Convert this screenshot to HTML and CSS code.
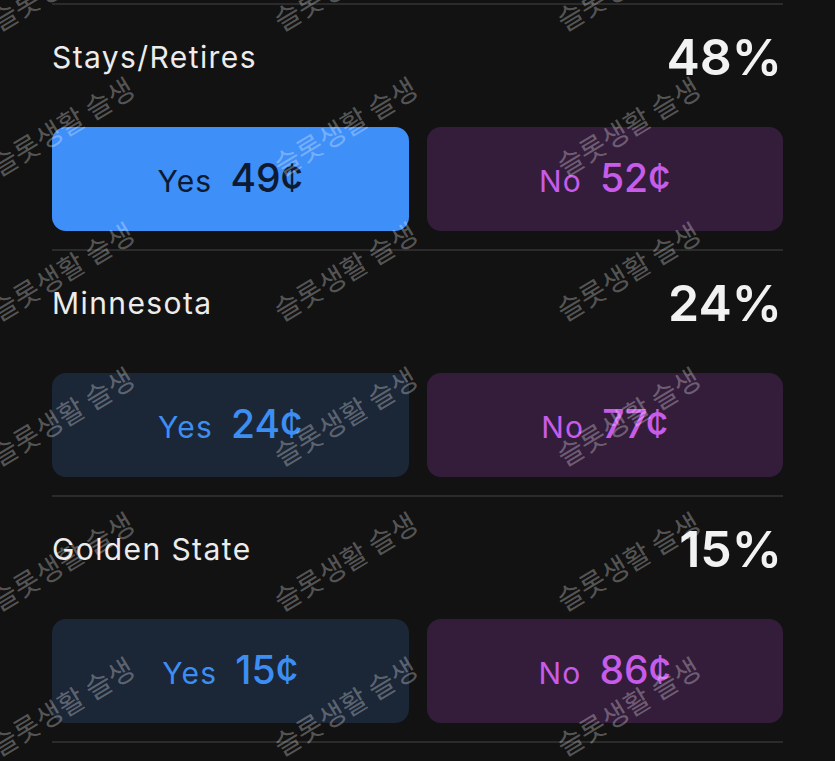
FILE: index.html
```html
<!DOCTYPE html>
<html lang="en">
<head>
<meta charset="utf-8">
<title>Markets</title>
<link rel="stylesheet" href="styles.css">
</head>
<body>
<div class="page">
  <ul class="markets">
    <li class="market">
      <div class="head"><span class="name">Stays/Retires</span><span class="pct">48%</span></div>
      <div class="actions">
        <button class="btn yes active"><span class="lbl">Yes</span><span class="price">49¢</span></button>
        <button class="btn no"><span class="lbl">No</span><span class="price">52¢</span></button>
      </div>
    </li>
    <li class="market">
      <div class="head"><span class="name">Minnesota</span><span class="pct">24%</span></div>
      <div class="actions">
        <button class="btn yes"><span class="lbl">Yes</span><span class="price">24¢</span></button>
        <button class="btn no"><span class="lbl">No</span><span class="price">77¢</span></button>
      </div>
    </li>
    <li class="market">
      <div class="head"><span class="name">Golden State</span><span class="pct">15%</span></div>
      <div class="actions">
        <button class="btn yes"><span class="lbl">Yes</span><span class="price">15¢</span></button>
        <button class="btn no"><span class="lbl">No</span><span class="price">86¢</span></button>
      </div>
    </li>
  </ul>
  <div class="watermark" aria-hidden="true">
    <span>슬롯생활 슬생</span><span>슬롯생활 슬생</span><span>슬롯생활 슬생</span>
    <span>슬롯생활 슬생</span><span>슬롯생활 슬생</span><span>슬롯생활 슬생</span>
    <span>슬롯생활 슬생</span><span>슬롯생활 슬생</span><span>슬롯생활 슬생</span>
    <span>슬롯생활 슬생</span><span>슬롯생활 슬생</span><span>슬롯생활 슬생</span>
    <span>슬롯생활 슬생</span><span>슬롯생활 슬생</span><span>슬롯생활 슬생</span>
    <span>슬롯생활 슬생</span><span>슬롯생활 슬생</span><span>슬롯생활 슬생</span>
  </div>
</div>
</body>
</html>
```

FILE: styles.css
```css
* { box-sizing: border-box; }
html, body {
  margin: 0;
  padding: 0;
  background: #121212;
}
body {
  font-family: Inter, "Noto Sans", sans-serif;
  color: #ececec;
}
.page {
  position: relative;
  width: 835px;
  height: 761px;
  overflow: hidden;
  padding: 3px 52px 0;
}
.markets {
  list-style: none;
  margin: 0;
  padding: 0;
}
.market {
  border-top: 2px solid #2b2b2b;
  padding: 22px 0 18px;
  display: flex;
  flex-direction: column;
  gap: 40px;
}
.market:last-child {
  border-bottom: 2px solid #2b2b2b;
}
.head {
  height: 60px;
  display: flex;
  align-items: center;
  justify-content: space-between;
}
.name {
  font-size: 30px;
  font-weight: 400;
  letter-spacing: 1.4px;
  color: #ececec;
}
.pct {
  font-size: 50px;
  font-weight: 600;
  color: #f2f2f2;
  margin-right: 1px;
}
.actions {
  display: grid;
  grid-template-columns: 1fr 1fr;
  gap: 18px;
}
.btn {
  height: 104px;
  border: 0;
  border-radius: 14px;
  display: flex;
  align-items: baseline;
  justify-content: center;
  padding-top: 27px;
  gap: 18px;
  font-family: inherit;
  cursor: pointer;
}
.lbl {
  font-size: 30px;
  font-weight: 400;
  letter-spacing: 1.2px;
}
.price {
  font-size: 39px;
  font-weight: 500;
}
.yes {
  background: #1b2637;
  color: #3d8ef3;
}
.yes.active {
  background: #3f8ff8;
  color: #0c1a33;
}
.no {
  background: #341d3b;
  color: #c75ce8;
}
.watermark {
  position: absolute;
  left: 0;
  top: -111px;
  display: grid;
  grid-template-columns: repeat(3, 283px);
  grid-auto-rows: 145px;
  pointer-events: none;
}
.watermark span {
  align-self: end;
  justify-self: start;
  font-family: "Noto Sans CJK KR", sans-serif;
  font-size: 28px;
  line-height: 1;
  white-space: nowrap;
  color: rgba(255, 255, 255, 0.3);
  transform-origin: 0 100%;
  transform: rotate(-31deg);
}
```
